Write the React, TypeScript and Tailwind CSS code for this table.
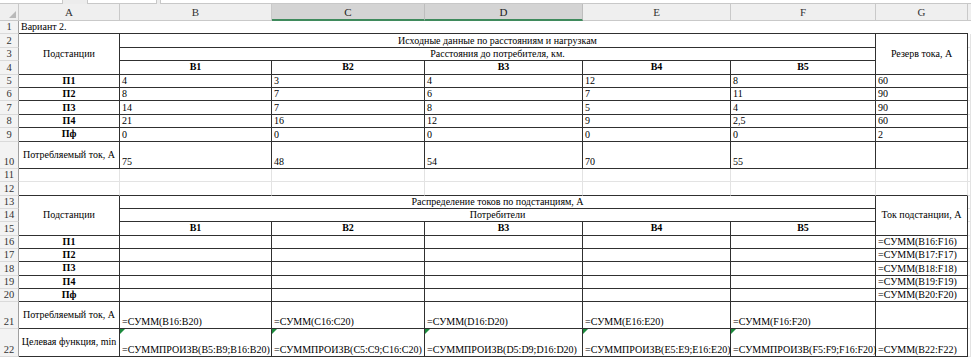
import React from "react";

// Excel-like sheet: "Вариант 2."
type Cell = { t?: string; cls: string; tri?: boolean };

const DK = "border-r border-b border-[#303030]";
const LT = "border-r border-b border-[#e3e3e3]";
const TOP = "border-r border-b border-r-[#e3e3e3] border-b-[#303030]";
const CEN = "flex items-center justify-center text-center";
const VAL = "flex items-end pl-[2px]";

const cols = ["A", "B", "C", "D", "E", "F", "G"];

const head = (t: string): Cell => ({ t, cls: `${DK} ${CEN} font-bold` });
const val = (t: string): Cell => ({ t, cls: `${DK} ${VAL}` });
const lt: Cell = { cls: LT };
const dk: Cell = { cls: DK };

const rows: Cell[][] = [
  // 1
  [
    { t: "Вариант 2.", cls: `border-b border-[#303030] ${VAL} whitespace-nowrap` },
    { cls: "border-b border-[#303030]" },
    { cls: "border-b border-[#303030]" },
    { cls: "border-b border-[#303030]" },
    { cls: "border-b border-[#303030]" },
    { cls: "border-b border-[#303030]" },
    { cls: "border-b border-[#303030]" },
    { cls: "" },
  ],
  // 2
  [
    { t: "Подстанции", cls: `${DK} ${CEN} row-span-3` },
    { t: "Исходные данные по расстояниям и нагрузкам", cls: `${DK} ${CEN} col-span-5` },
    { t: "Резерв тока, А", cls: `${DK} ${CEN} row-span-3` },
    lt,
  ],
  // 3
  [{ t: "Расстояния до потребителя, км.", cls: `${DK} ${CEN} col-span-5` }, lt],
  // 4
  [head("В1"), head("В2"), head("В3"), head("В4"), head("В5"), lt],
  // 5-9
  [head("П1"), val("4"), val("3"), val("4"), val("12"), val("8"), val("60"), lt],
  [head("П2"), val("8"), val("7"), val("6"), val("7"), val("11"), val("90"), lt],
  [head("П3"), val("14"), val("7"), val("8"), val("5"), val("4"), val("90"), lt],
  [head("П4"), val("21"), val("16"), val("12"), val("9"), val("2,5"), val("60"), lt],
  [head("Пф"), val("0"), val("0"), val("0"), val("0"), val("0"), val("2"), lt],
  // 10
  [
    { t: "Потребляемый ток, А", cls: `${DK} ${CEN} whitespace-nowrap` },
    val("75"),
    val("48"),
    val("54"),
    val("70"),
    val("55"),
    dk,
    lt,
  ],
  // 11
  [lt, lt, lt, lt, lt, lt, lt, lt],
  // 12
  [
    { cls: TOP },
    { cls: TOP },
    { cls: TOP },
    { cls: TOP },
    { cls: TOP },
    { cls: TOP },
    { cls: TOP },
    lt,
  ],
  // 13
  [
    { t: "Подстанции", cls: `${DK} ${CEN} row-span-3` },
    { t: "Распределение токов по подстанциям, А", cls: `${DK} ${CEN} col-span-5` },
    { t: "Ток подстанции, А", cls: `${DK} ${CEN} row-span-3 whitespace-nowrap` },
    lt,
  ],
  // 14
  [{ t: "Потребители", cls: `${DK} ${CEN} col-span-5` }, lt],
  // 15
  [head("В1"), head("В2"), head("В3"), head("В4"), head("В5"), lt],
  // 16-20
  [head("П1"), dk, dk, dk, dk, dk, val("=СУММ(B16:F16)"), lt],
  [head("П2"), dk, dk, dk, dk, dk, val("=СУММ(B17:F17)"), lt],
  [head("П3"), dk, dk, dk, dk, dk, val("=СУММ(B18:F18)"), lt],
  [head("П4"), dk, dk, dk, dk, dk, val("=СУММ(B19:F19)"), lt],
  [head("Пф"), dk, dk, dk, dk, dk, val("=СУММ(B20:F20)"), lt],
  // 21
  [
    { t: "Потребляемый ток, А", cls: `${DK} ${CEN} whitespace-nowrap` },
    val("=СУММ(B16:B20)"),
    val("=СУММ(C16:C20)"),
    val("=СУММ(D16:D20)"),
    val("=СУММ(E16:E20)"),
    val("=СУММ(F16:F20)"),
    dk,
    lt,
  ],
  // 22
  [
    { t: "Целевая функция, min", cls: `${DK} ${CEN} whitespace-nowrap` },
    { ...val("=СУММПРОИЗВ(B5:B9;B16:B20)"), tri: true },
    { ...val("=СУММПРОИЗВ(C5:C9;C16:C20)"), tri: true },
    { ...val("=СУММПРОИЗВ(D5:D9;D16:D20)"), tri: true },
    { ...val("=СУММПРОИЗВ(E5:E9;E16:E20)"), tri: true },
    { ...val("=СУММПРОИЗВ(F5:F9;F16:F20)"), tri: true },
    val("=СУММ(B22:F22)"),
    lt,
  ],
];

const RowHead: React.FC<{ n: number }> = ({ n }) => (
  <div className="flex items-end justify-center border-r border-b border-r-[#a0a0a0] border-b-[#dadada] bg-[#f3f3f3] text-[#333] text-[10.5px] leading-[12px]">
    {n}
  </div>
);

const App: React.FC = () => {
  return (
    <div className="w-[971px] h-[358px] overflow-hidden bg-white font-['Liberation_Serif','Times_New_Roman',serif] text-[10px] text-black">
      {/* formula bar remnant */}
      <div className="flex h-[4px] bg-[#ececec]">
        <div className="w-[63px] bg-white border-b border-r border-[#c8c8c8]" />
        <div className="w-[24px]" />
        <div className="w-[70px] bg-white border-b border-x border-[#c8c8c8]" />
        <div className="w-[3px]" />
        <div className="flex-1 bg-white border-b border-l border-[#c8c8c8]" />
      </div>

      <div className="grid grid-cols-[19px_101px_152px_153px_158px_148px_145px_92px_1fr] grid-rows-[17px_repeat(9,13.4px)_27.3px_repeat(10,13.35px)_26.6px_28px] leading-[12px]">
        {/* column headers */}
        <div className="relative bg-[#efefef] border-r border-b border-[#c9c9c9]">
          <div className="absolute right-[2px] bottom-[2px] w-0 h-0 border-l-[7px] border-b-[7px] border-l-transparent border-b-[#b9b9b9]" />
        </div>
        {cols.map((c) => (
          <div
            key={c}
            className={
              c === "C" || c === "D"
                ? "flex items-center justify-center bg-[#d4d4d4] border-r border-r-[#bdbdbd] border-b-2 border-b-[#3f8a5c] text-[#222] text-[11px]"
                : "flex items-center justify-center bg-[#efefef] border-r border-b border-[#c9c9c9] text-[#333] text-[11px]"
            }
          >
            {c}
          </div>
        ))}
        <div className="bg-[#efefef] border-b border-[#c9c9c9]" />

        {rows.map((row, i) => (
          <React.Fragment key={i}>
            <RowHead n={i + 1} />
            {row.map((cell, j) => (
              <div key={j} className={`relative whitespace-nowrap overflow-visible ${cell.cls}`}>
                {cell.tri && (
                  <span className="absolute left-0 top-0 w-0 h-0 border-t-[5px] border-r-[5px] border-t-[#1b8a3c] border-r-transparent" />
                )}
                {cell.t}
              </div>
            ))}
          </React.Fragment>
        ))}
      </div>
    </div>
  );
};

export default App;
